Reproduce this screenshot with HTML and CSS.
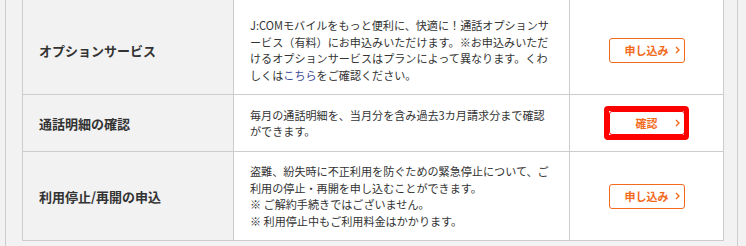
FILE: index.html
```html
<!DOCTYPE html>
<html lang="ja">
<head>
<meta charset="utf-8">
<link rel="stylesheet" href="styles.css">
</head>
<body>
<div class="frame">
  <div class="table">
    <div class="row stub">
      <div class="cell head"></div>
      <div class="cell body"></div>
      <div class="cell action"></div>
    </div>
    <div class="row">
      <div class="cell head">オプションサービス</div>
      <div class="cell body"><p>J:COMモバイルをもっと便利に、快適に！通話オプションサ<br>ービス（有料）にお申込みいただけます。※お申込みいただ<br>けるオプションサービスはプランによって異なります。くわ<br>しくは<a class="link" href="#">こちら</a>をご確認ください。</p></div>
      <div class="cell action"><a class="btn" href="#"><span>申し込み</span><svg class="chev" viewBox="0 0 5 8" width="5" height="8"><polyline points="1,1 4,4 1,7" fill="none" stroke="currentColor" stroke-width="1.4"/></svg></a></div>
    </div>
    <div class="row short">
      <div class="cell head">通話明細の確認</div>
      <div class="cell body"><p>毎月の通話明細を、当月分を含み過去3カ月請求分まで確認<br>ができます。</p></div>
      <div class="cell action"><a class="btn marked" href="#"><span>確認</span><svg class="chev" viewBox="0 0 5 8" width="5" height="8"><polyline points="1,1 4,4 1,7" fill="none" stroke="currentColor" stroke-width="1.4"/></svg></a></div>
    </div>
    <div class="row">
      <div class="cell head">利用停止/再開の申込</div>
      <div class="cell body"><p>盗難、紛失時に不正利用を防ぐための緊急停止について、ご<br>利用の停止・再開を申し込むことができます。<br>※ ご解約手続きではございません。<br>※ 利用停止中もご利用料金はかかります。</p></div>
      <div class="cell action"><a class="btn" href="#"><span>申し込み</span><svg class="chev" viewBox="0 0 5 8" width="5" height="8"><polyline points="1,1 4,4 1,7" fill="none" stroke="currentColor" stroke-width="1.4"/></svg></a></div>
    </div>
  </div>
</div>
</body>
</html>
```

FILE: styles.css
```css
html, body {
  margin: 0;
  padding: 0;
  background: #f2f2f2;
  height: 100%;
  overflow: hidden;
}

body {
  font-family: "Noto Sans CJK JP", "Noto Sans", sans-serif;
  color: #333;
}

.frame {
  margin-left: 5px;
  width: 733px;
  box-sizing: border-box;
  border-left: 1px solid #cccccc;
  border-right: 1px solid #cccccc;
  padding: 0 15px 0 16px;
  height: 100%;
}

.table {
  border-left: 1px solid #cccccc;
  width: 702px;
  box-sizing: border-box;
}

.row {
  display: grid;
  grid-template-columns: 211px 336px 154px;
  border-bottom: 1px solid #cccccc;
}

.row.stub {
  height: 5px;
}

.row.short {
  min-height: 56px;
}

.cell {
  border-right: 1px solid #cccccc;
  display: flex;
  align-items: center;
  box-sizing: border-box;
}

.cell.head {
  background: #f2f2f2;
  padding: 0 10px 0 16px;
  font-size: 13px;
  font-weight: 700;
  color: #333;
}

.cell.body {
  background: #fff;
  padding: 11px 10px 11px 16px;
  font-size: 11.1px;
  line-height: 16.5px;
  white-space: nowrap;
}

.cell.body p {
  margin: 0;
}

.link {
  color: #3b4a9c;
  text-decoration: none;
}

.cell.action {
  background: #fff;
  justify-content: center;
  padding-left: 1px;
}

.btn {
  position: relative;
  display: flex;
  align-items: center;
  justify-content: center;
  width: 76px;
  height: 25px;
  box-sizing: border-box;
  border: 1px solid #f26a1b;
  border-radius: 3px;
  color: #f26a1b;
  font-size: 11px;
  font-weight: 700;
  text-decoration: none;
  background: #fff;
}

.btn span {
  margin-right: 1px;
}

.chev {
  position: absolute;
  right: 4px;
  top: 50%;
  margin-top: -4px;
}

.btn.marked {
  height: 24px;
  border-color: #ff0000;
}

.btn.marked::after {
  content: "";
  position: absolute;
  top: -6px;
  left: -6px;
  right: -5px;
  bottom: -6px;
  border: 5px solid #ff0000;
  border-radius: 4px;
}
```
